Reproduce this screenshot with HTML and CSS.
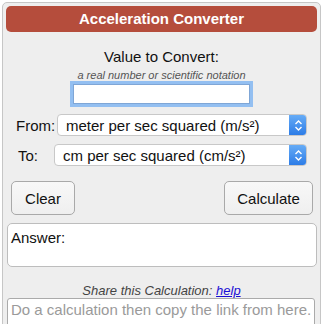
FILE: index.html
```html
<!DOCTYPE html>
<html>
<head>
<meta charset="utf-8">
<link rel="stylesheet" href="styles.css">
</head>
<body>
<div class="panel">
  <div class="header">Acceleration Converter</div>
  <div class="value-block">
    <div class="value-title">Value to Convert:</div>
    <div class="hint">a real number or scientific notation</div>
    <input class="value-input" type="text">
  </div>
  <div class="unit-row from-row">
    <span class="unit-label">From:</span>
    <div class="select"><span class="select-text">meter per sec squared (m/s²)</span><span class="arrow"><svg width="9" height="13" viewBox="0 0 9 13"><path d="M1.5 5 L4.5 2 L7.5 5 M1.5 8 L4.5 11 L7.5 8" fill="none" stroke="#fff" stroke-width="1.4"/></svg></span></div>
  </div>
  <div class="unit-row to-row">
    <span class="unit-label">To:</span>
    <div class="select"><span class="select-text">cm per sec squared (cm/s²)</span><span class="arrow"><svg width="9" height="13" viewBox="0 0 9 13"><path d="M1.5 5 L4.5 2 L7.5 5 M1.5 8 L4.5 11 L7.5 8" fill="none" stroke="#fff" stroke-width="1.4"/></svg></span></div>
  </div>
  <div class="buttons">
    <button class="btn btn-clear">Clear</button>
    <button class="btn btn-calc">Calculate</button>
  </div>
  <div class="answer">Answer:</div>
  <div class="share">Share this Calculation: <a href="#" class="help">help</a></div>
  <div class="share-box">Do a calculation then copy the link from here.</div>
</div>
</body>
</html>
```
FILE: styles.css
```css
* { box-sizing: border-box; }
html, body { margin: 0; padding: 0; background: #fff; }
body { font-family: "Liberation Sans", Arial, sans-serif; color: #111; overflow: hidden; height: 324px; }
.panel {
  margin: 2px 0 0 2px;
  width: 319px;
  height: 340px;
  border: 1px solid #c6c6c6;
  border-radius: 5px;
  background: #eeeeee;
  padding: 3px;
}
.header {
  height: 26px;
  background: #b54d3c;
  border-radius: 5px;
  color: #fff;
  font-weight: bold;
  font-size: 15px;
  line-height: 26px;
  text-align: center;
}
.value-block { display: flex; flex-direction: column; align-items: center; padding-top: 16px; }
.value-title { font-size: 15px; line-height: 18px; }
.hint { font-size: 11px; font-style: italic; color: #555; line-height: 13px; margin-top: 3px; }
.value-input {
  margin-top: 2px;
  width: 177px;
  height: 20px;
  border: 1px solid #7fa6d6;
  box-shadow: 0 0 0 3px #93bff1;
  background: #fff;
  outline: none;
}
.unit-row { display: flex; align-items: center; height: 22px; margin-right: 10px; }
.from-row { margin-top: 10px; }
.to-row { margin-top: 8px; }
.unit-label { font-size: 15px; }
.from-row .unit-label { margin-left: 10px; width: 41px; }
.to-row .unit-label { margin-left: 12px; width: 36px; }
.select {
  flex: 1;
  height: 22px;
  display: flex;
  align-items: center;
  background: #fff;
  border: 1px solid #c8c8c8;
  border-radius: 4px;
  font-size: 15px;
  overflow: hidden;
}
.select-text { flex: 1; padding-left: 8px; white-space: nowrap; }
.arrow {
  width: 18px;
  height: 22px;
  margin: -1px -1px -1px 0;
  border-radius: 0 4px 4px 0;
  background: linear-gradient(#69aef7, #2a7ae6);
  display: flex;
  align-items: center;
  justify-content: center;
}
.buttons { display: flex; justify-content: space-between; margin: 15px 4px 0 5px; }
.btn {
  height: 34px;
  font-family: "Liberation Sans", Arial, sans-serif;
  font-size: 15px;
  color: #111;
  background: linear-gradient(#f8f8f8, #efefef);
  border: 1px solid #a9a9a9;
  border-radius: 5px;
  padding: 0;
}
.btn-clear { width: 64px; }
.btn-calc { width: 89px; }
.answer {
  margin: 8px 0 0 1px;
  height: 44px;
  background: #fff;
  border: 1px solid #bdbdbd;
  border-radius: 5px;
  font-size: 15px;
  padding: 5px 0 0 3px;
}
.share { text-align: center; font-size: 13px; font-style: italic; color: #444; margin-top: 17px; line-height: 14px; }
.help { color: #1a0dd5; }
.share-box {
  margin: 0 2px 0 1px;
  height: 40px;
  background: #fff;
  border: 1px solid #aaa;
  border-radius: 3px;
  font-size: 15px;
  color: #9a9a9a;
  padding: 2px 0 0 3px;
}
```
